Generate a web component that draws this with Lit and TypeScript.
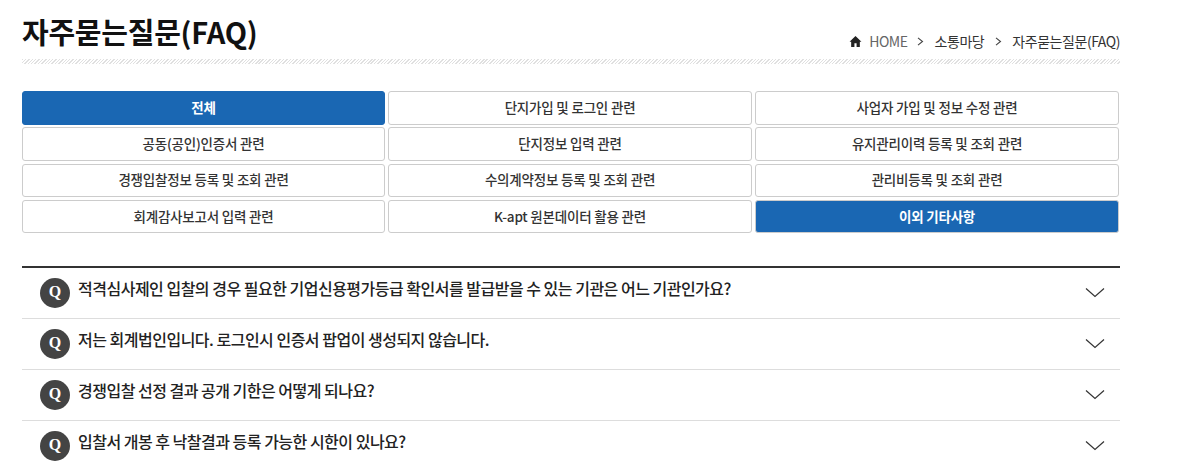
import { LitElement, html, css, svg } from "lit";
import { customElement } from "lit/decorators.js";

const cats = [
  "전체", "단지가입 및 로그인 관련", "사업자 가입 및 정보 수정 관련",
  "공동(공인)인증서 관련", "단지정보 입력 관련", "유지관리이력 등록 및 조회 관련",
  "경쟁입찰정보 등록 및 조회 관련", "수의계약정보 등록 및 조회 관련", "관리비등록 및 조회 관련",
  "회계감사보고서 입력 관련", "K-apt 원본데이터 활용 관련", "이외 기타사항",
];
const active = new Set([0, 11]);
const faqs = [
  "적격심사제인 입찰의 경우 필요한 기업신용평가등급 확인서를 발급받을 수 있는 기관은 어느 기관인가요?",
  "저는 회계법인입니다. 로그인시 인증서 팝업이 생성되지 않습니다.",
  "경쟁입찰 선정 결과 공개 기한은 어떻게 되나요?",
  "입찰서 개봉 후 낙찰결과 등록 가능한 시한이 있나요?",
];

@customElement("app-root")
export class AppRoot extends LitElement {
  static styles = css`
    :host {
      display: block;
      height: 465px;
      overflow: hidden;
      background: #fff;
      font-family: "Noto Sans CJK KR", "Noto Sans", sans-serif;
      color: #222;
    }
    .wrap { width: 1098px; margin-left: 22px; }
    .head {
      display: flex;
      justify-content: space-between;
      align-items: flex-end;
      height: 59px;
    }
    h1 {
      margin: 0;
      font-size: 29px;
      line-height: 40px;
      font-weight: 700;
      color: #111;
      letter-spacing: -0.25px;
      align-self: flex-start;
      margin-top: 11px;
    }
    .crumb {
      display: flex;
      align-items: center;
      font-size: 14px;
      line-height: 20px;
      letter-spacing: -0.45px;
      margin-bottom: 8px;
      color: #333;
    }
    .crumb svg.home { width: 13px; height: 13px; margin-right: 7px; }
    .crumb .h { color: #666; }
    .crumb svg.sep { width: 7px; height: 9px; margin: 0 10.5px; }
    .crumb svg.sep.first { margin-left: 9.5px; }
    .hatch {
      height: 5px;
      background: repeating-linear-gradient(135deg, #e0e0e0 0 1px, #fff 1px 2.4px);
    }
    .grid {
      display: grid;
      grid-template-columns: 363px 364px 364px;
      column-gap: 3px;
      grid-auto-rows: 33.500px;
      row-gap: 2.800px;
      margin-top: 27px;
    }
    .cat {
      box-sizing: border-box;
      display: flex;
      align-items: center;
      justify-content: center;
      padding-bottom: 2px;
      border: 1px solid #ccc;
      border-radius: 3px;
      font-size: 13.500px;
      font-weight: 500;
      letter-spacing: -0.2px;
      color: #333;
      background: #fff;
    }
    .cat.on { background: #1a67b3; border-color: #1a67b3; color: #fff; font-weight: 700; }
    .cat.last { border-color: #ccc; }
    .list { margin-top: 33px; border-top: 2px solid #333; }
    .row {
      box-sizing: border-box;
      height: 51px;
      border-bottom: 1px solid #ddd;
      display: flex;
      align-items: center;
      padding: 0 15px 0 18px;
    }
    .q {
      box-sizing: border-box;
      width: 30px;
      height: 30px;
      flex: none;
      border-radius: 50%;
      background: #444;
      color: #fff;
      font-family: "Liberation Serif", serif;
      font-weight: 700;
      font-size: 16px;
      padding-bottom: 2px;
      display: flex;
      align-items: center;
      justify-content: center;
      margin-right: 8px;
    }
    .t {
      flex: 1;
      font-size: 16px;
      font-weight: 500;
      line-height: 22px;
      letter-spacing: -0.5px;
      color: #222;
      margin-top: -11px;
    }
    .row svg { width: 20px; height: 12px; flex: none; }
  `;

  render() {
    const sep = svg`<path d="M1 .8 5.5 4.5 1 8.2" fill="none" stroke="#444" stroke-width="1.1"/>`;
    return html`
      <div class="wrap">
        <div class="head">
          <h1>자주묻는질문(FAQ)</h1>
          <div class="crumb">
            <svg class="home" viewBox="0 0 12 12"><path d="M6 1 .5 6.2H2V11h3V7.6h2V11h3V6.2h1.500z" fill="#222"/></svg>
            <span class="h">HOME</span>
            <svg class="sep first" viewBox="0 0 7 9">${sep}</svg>
            <span>소통마당</span>
            <svg class="sep" viewBox="0 0 7 9">${sep}</svg>
            <span>자주묻는질문(FAQ)</span>
          </div>
        </div>
        <div class="hatch"></div>
        <div class="grid">
          ${cats.map((c, i) => html`<div class="cat ${active.has(i) ? "on" : ""} ${i === 11 ? "last" : ""}">${c}</div>`)}
        </div>
        <div class="list">
          ${faqs.map((f) => html`
            <div class="row">
              <span class="q">Q</span>
              <span class="t">${f}</span>
              <svg viewBox="0 0 20 12"><path d="M1 1.500 10 9.500 19 1.500" fill="none" stroke="#333" stroke-width="1.200"/></svg>
            </div>`)}
        </div>
      </div>
    `;
  }
}
